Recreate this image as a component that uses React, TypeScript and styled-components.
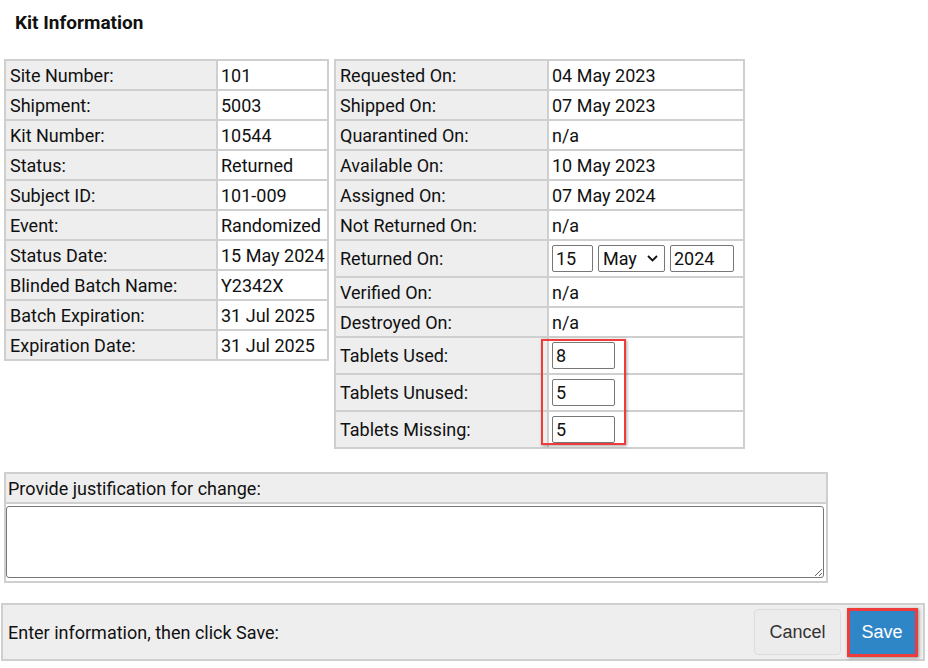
import React from "react";
import styled, { createGlobalStyle } from "styled-components";

const GlobalStyle = createGlobalStyle`
  body {
    margin: 0;
    background: #fff;
    font-family: Roboto, "Liberation Sans", sans-serif;
    color: #111;
  }
`;

const Page = styled.div`
  width: 928px;
  padding: 0 0 0 4px;
  box-sizing: border-box;
`;

const Title = styled.h1`
  margin: 0;
  padding: 11px 0 0 11px;
  height: 48px;
  box-sizing: border-box;
  font-size: 19px;
  font-weight: 700;
`;

const Tables = styled.div`
  display: flex;
  align-items: flex-start;
  gap: 5px;
  margin-top: 11px;
`;

const InfoTable = styled.table<{ $width: number; $labelWidth: number }>`
  border-collapse: collapse;
  width: ${(p) => p.$width}px;
  font-size: 18px;
  table-layout: fixed;

  col:first-child {
    width: ${(p) => p.$labelWidth}px;
  }
`;

const Row = styled.tr<{ $tall?: boolean }>`
  height: ${(p) => (p.$tall ? 37 : 30)}px;
`;

const Label = styled.td`
  background: #eeeeee;
  border: 2px solid #cfcfcf;
  padding: 0 4px;
  white-space: nowrap;
`;

const Value = styled.td`
  background: #fff;
  border: 2px solid #cfcfcf;
  padding: 0 3px;
  white-space: nowrap;
  position: relative;
`;

const DateInputs = styled.div`
  display: flex;
  gap: 5px;
  align-items: center;
`;

const TextBox = styled.input<{ $w: number }>`
  width: ${(p) => p.$w}px;
  height: 27px;
  box-sizing: border-box;
  border: 1px solid #777;
  border-radius: 2px;
  font: 18px Roboto, "Liberation Sans", sans-serif;
  padding: 0 3px;
  color: #111;
`;

const SelectBox = styled.div`
  width: 67px;
  height: 27px;
  box-sizing: border-box;
  border: 1px solid #777;
  border-radius: 2px;
  display: flex;
  align-items: center;
  justify-content: space-between;
  padding: 0 6px 0 4px;
  font-size: 18px;
`;

const Highlight = styled.div`
  position: absolute;
  z-index: 2;
  left: -8px;
  top: 1px;
  width: 85px;
  height: 106px;
  border: 2px solid #ee3b3b;
  box-shadow: 1px 1px 3px rgba(0, 0, 0, 0.35);
  box-sizing: border-box;
  pointer-events: none;
`;

const Justify = styled.section`
  margin-top: 23px;
  width: 824px;
  border: 2px solid #cfcfcf;
  box-sizing: border-box;
`;

const JustifyHeader = styled.div`
  background: #eeeeee;
  height: 28px;
  border-bottom: 2px solid #cfcfcf;
  display: flex;
  align-items: center;
  padding-left: 2px;
  font-size: 18px;
`;

const JustifyBody = styled.div`
  padding: 2px 2px 3px 0;
`;

const TextArea = styled.textarea`
  display: block;
  width: 818px;
  height: 72px;
  box-sizing: border-box;
  border: 1px solid #777;
  border-radius: 3px;
  resize: vertical;
  font: 18px Roboto, "Liberation Sans", sans-serif;
`;

const Footer = styled.div`
  margin: 20px 0 0 -3px;
  width: 924px;
  height: 58px;
  box-sizing: border-box;
  background: #eeeeee;
  border: 2px solid #cfcfcf;
  display: flex;
  align-items: center;
  justify-content: space-between;
  padding: 0 6px 0 5px;
  font-size: 18px;
`;

const Buttons = styled.div`
  display: flex;
  align-items: center;
  gap: 6px;
`;

const Button = styled.button<{ $primary?: boolean }>`
  display: block;
  height: 46px;
  padding: 0;
  border-radius: 4px;
  font: 18px "Liberation Sans", Arial, sans-serif;
  border: 1px solid ${(p) => (p.$primary ? "#2a78b4" : "#dcdcdc")};
  background: ${(p) => (p.$primary ? "#2f86c7" : "#ececec")};
  color: ${(p) => (p.$primary ? "#fff" : "#333")};
  width: ${(p) => (p.$primary ? 70 : 87)}px;
`;

const SaveWrap = styled.div`
  position: relative;

  &::after {
    content: "";
    position: absolute;
    inset: -1px -1px -2px 0;
    border: 3px solid #ee3b3b;
    box-shadow: 1px 1px 3px rgba(0, 0, 0, 0.4);
    pointer-events: none;
  }
`;

const left: [string, string][] = [
  ["Site Number:", "101"],
  ["Shipment:", "5003"],
  ["Kit Number:", "10544"],
  ["Status:", "Returned"],
  ["Subject ID:", "101-009"],
  ["Event:", "Randomized"],
  ["Status Date:", "15 May 2024"],
  ["Blinded Batch Name:", "Y2342X"],
  ["Batch Expiration:", "31 Jul 2025"],
  ["Expiration Date:", "31 Jul 2025"],
];

const rightTop: [string, string][] = [
  ["Requested On:", "04 May 2023"],
  ["Shipped On:", "07 May 2023"],
  ["Quarantined On:", "n/a"],
  ["Available On:", "10 May 2023"],
  ["Assigned On:", "07 May 2024"],
  ["Not Returned On:", "n/a"],
];

const Chevron = () => (
  <svg width="11" height="7" viewBox="0 0 11 7">
    <path d="M1 1l4.5 4.5L10 1" fill="none" stroke="#111" strokeWidth="1.8" />
  </svg>
);

export default function App() {
  return (
    <Page>
      <GlobalStyle />
      <Title>Kit Information</Title>
      <Tables>
        <InfoTable $width={325} $labelWidth={212}>
          <colgroup>
            <col />
            <col />
          </colgroup>
          <tbody>
            {left.map(([l, v]) => (
              <Row key={l}>
                <Label>{l}</Label>
                <Value>{v}</Value>
              </Row>
            ))}
          </tbody>
        </InfoTable>
        <InfoTable $width={411} $labelWidth={213}>
          <colgroup>
            <col />
            <col />
          </colgroup>
          <tbody>
            {rightTop.map(([l, v]) => (
              <Row key={l}>
                <Label>{l}</Label>
                <Value>{v}</Value>
              </Row>
            ))}
            <Row $tall>
              <Label>Returned On:</Label>
              <Value>
                <DateInputs>
                  <TextBox $w={41} defaultValue="15" />
                  <SelectBox>
                    <span>May</span>
                    <Chevron />
                  </SelectBox>
                  <TextBox $w={64} defaultValue="2024" />
                </DateInputs>
              </Value>
            </Row>
            <Row>
              <Label>Verified On:</Label>
              <Value>n/a</Value>
            </Row>
            <Row>
              <Label>Destroyed On:</Label>
              <Value>n/a</Value>
            </Row>
            <Row $tall>
              <Label>Tablets Used:</Label>
              <Value>
                <TextBox $w={63} defaultValue="8" />
                <Highlight />
              </Value>
            </Row>
            <Row $tall>
              <Label>Tablets Unused:</Label>
              <Value>
                <TextBox $w={63} defaultValue="5" />
              </Value>
            </Row>
            <Row $tall>
              <Label>Tablets Missing:</Label>
              <Value>
                <TextBox $w={63} defaultValue="5" />
              </Value>
            </Row>
          </tbody>
        </InfoTable>
      </Tables>
      <Justify>
        <JustifyHeader>Provide justification for change:</JustifyHeader>
        <JustifyBody>
          <TextArea />
        </JustifyBody>
      </Justify>
      <Footer>
        <span>Enter information, then click Save:</span>
        <Buttons>
          <Button>Cancel</Button>
          <SaveWrap>
            <Button $primary>Save</Button>
          </SaveWrap>
        </Buttons>
      </Footer>
    </Page>
  );
}
